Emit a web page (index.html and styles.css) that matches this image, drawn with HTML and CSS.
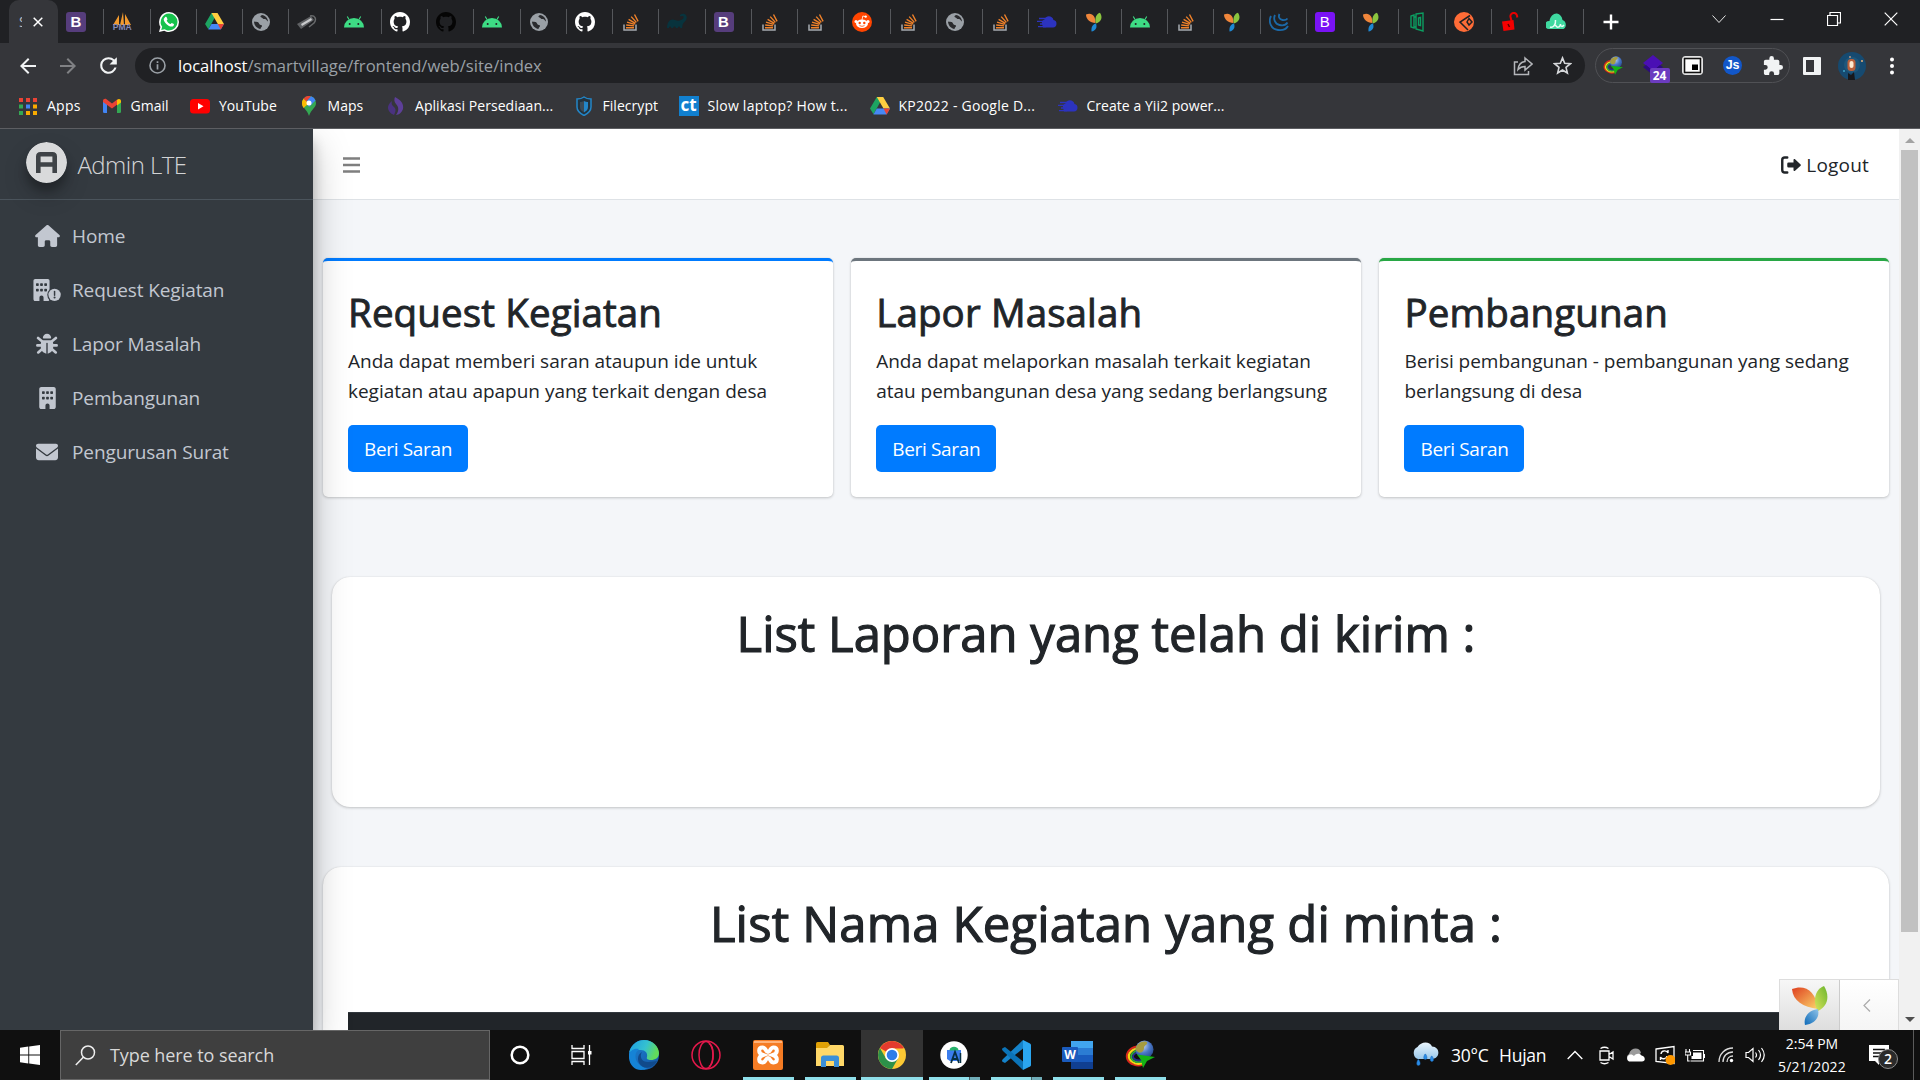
FILE: index.html
```html
<!DOCTYPE html>
<html lang="id">
<head>
<meta charset="utf-8">
<title>Smart Village</title>
<link rel="stylesheet" href="styles.css">
</head>
<body>
<svg class="sprite" width="0" height="0" aria-hidden="true">
<defs>
<linearGradient id="g-yr" x1="0" y1="0" x2="1" y2="1"><stop offset="0" stop-color="#df3f1f"/><stop offset="1" stop-color="#fbd56b"/></linearGradient>
<linearGradient id="g-yg" x1="1" y1="0" x2="0" y2="1"><stop offset="0" stop-color="#6cb52d"/><stop offset="1" stop-color="#d9e45c"/></linearGradient>
<linearGradient id="g-yb" x1="1" y1="0" x2="0" y2="1"><stop offset="0" stop-color="#8fc3e8"/><stop offset="1" stop-color="#0d6ab8"/></linearGradient>
<linearGradient id="g-edge" x1="0" y1="0" x2="1" y2=".3"><stop offset="0" stop-color="#1b9de2"/><stop offset=".6" stop-color="#35c1d0"/><stop offset="1" stop-color="#62dc5a"/></linearGradient>
<linearGradient id="g-edge2" x1="0" y1="0" x2="1" y2="1"><stop offset="0" stop-color="#1c86d8"/><stop offset="1" stop-color="#1453a0"/></linearGradient>
<radialGradient id="g-globe" cx=".4" cy=".3" r=".8"><stop offset="0" stop-color="#c9d9f0"/><stop offset=".5" stop-color="#4a78c8"/><stop offset="1" stop-color="#20407f"/></radialGradient>
<linearGradient id="g-cloud" x1="0" y1="0" x2="0" y2="1"><stop offset="0" stop-color="#eaf5fd"/><stop offset="1" stop-color="#9ac8ea"/></linearGradient>
</defs>
<symbol id="pma" viewBox="0 0 20 20"><path d="M1 13 7 3l0 10zM8 13 11 0l1 13zM13 13V2l6 11z" fill="#f29a2e"/></symbol>
<symbol id="wa" viewBox="0 0 20 20"><path d="M10 0a10 10 0 0 1 0 20c-2 0-3.300-.4-4.800-1.300L0 20l1.400-5A10 10 0 0 1 10 0z" fill="#fff"/><path d="M10 1.500a8.500 8.500 0 0 1 0 17c-1.700 0-3-.4-4.400-1.300L2.200 18l1-3.200A8.500 8.500 0 0 1 10 1.500z" fill="#16c24c"/><path d="M6 5.300c.8-.7 1.500-.5 1.800.2l.7 1.700c.1.600-.8 1.200-.8 1.600.9 1.600 2 2.600 3.600 3.300.5 0 1-1.200 1.500-1.200l2 1c.5.300 0 1.800-.8 2.300-3 1.700-9.600-3.500-9.300-7.300z" fill="#fff"/></symbol>
<symbol id="drive" viewBox="0 0 20 18"><path d="M6.800 0h6.400L10 5.600 3.500 17.300 0 11.600z" fill="#1da462"/><path d="M6.800 0h6.400L20 11.600h-6.500z" fill="#ffcf40"/><path d="M6.800 11.600H20l-3.400 5.900H3.400z" fill="#4688f4"/><path d="M13.500 11.600H20l-3.400 5.900z" fill="#ea4335"/></symbol>
<symbol id="globe" viewBox="0 0 20 20"><circle cx="10" cy="10" r="9" fill="#9aa0a6"/><path d="M3 9.500c2 .5 4.500 0 5 2s3 1 3 2.500-1.500 1-1.500 3C5.800 16.500 3 13 3 9.500zM11 3c-2 .8-2 2-.5 2.500S12 7.500 14 7c1.500-.2 2 2.500 3 2.500C17 6.500 14.500 3.500 11 3z" fill="#2a2b2e"/></symbol>
<symbol id="chip" viewBox="0 0 20 20"><path d="M0 12 14 4l3 4L4 17z" fill="#5f6164"/><path d="M4 12 14 6l1 2L5 14z" fill="#c9cacc"/><path d="M13 4c5-1 7 3 4 7l-5 4" fill="none" stroke="#67696b" stroke-width="1.500"/></symbol>
<symbol id="android" viewBox="0 0 20 20"><path d="M0 15.500a10 9.500 0 0 1 20 0z" fill="#3ddc84"/><path d="M5 7.500 3.300 4.500M15 7.500l1.700-3" stroke="#3ddc84" stroke-width="1.100"/><circle cx="5.700" cy="12" r="1" fill="#202124"/><circle cx="14.300" cy="12" r="1" fill="#202124"/></symbol>
<symbol id="gh" viewBox="0 0 16 16"><path d="M8 0C3.580 0 0 3.580 0 8c0 3.540 2.290 6.530 5.470 7.590.4.070.55-.17.55-.38 0-.19-.01-.82-.01-1.490-2.010.37-2.530-.49-2.690-.94-.09-.23-.48-.94-.82-1.130-.28-.15-.68-.52-.01-.53.63-.01 1.080.58 1.230.82.72 1.210 1.870.87 2.330.66.070-.52.28-.87.51-1.070-1.780-.2-3.640-.89-3.640-3.950 0-.87.31-1.590.82-2.150-.08-.2-.36-1.020.08-2.120 0 0 .67-.21 2.200.82.64-.18 1.320-.27 2-.27.68 0 1.360.09 2 .27 1.530-1.040 2.200-.82 2.200-.82.44 1.100.16 1.920.08 2.120.51.56.82 1.270.82 2.150 0 3.070-1.870 3.750-3.650 3.950.29.25.54.73.54 1.480 0 1.070-.01 1.930-.01 2.200 0 .21.15.46.55.38A8.010 8.010 0 0 0 16 8c0-4.420-3.580-8-8-8z" fill="currentColor"/></symbol>
<symbol id="so" viewBox="0 0 20 20"><path d="M3 12.500V18h12v-5.500" fill="none" stroke="#a5abb0" stroke-width="1.500"/><path d="M5 15.700h8M5.200 13l7.900.9M6 10.200l7.600 2.200M7.600 7.300l6.800 4.100M10.200 4.600l5.200 5.800M13.500 2.500l3.600 6.800" stroke="#f0822a" stroke-width="1.400"/></symbol>
<symbol id="gradle" viewBox="0 0 20 20"><path d="M0 16C0 9 4 6 8 8c3 1.500 5 .5 7-.5s2-3.500.5-3.500-1.500 1-2.500 0 2-3 4.500-2 3.500 5 0 8c-2 1.500-2 3-2.300 6h-2c-.2-2-2.200-2-2.400 0h-2c-.2-2-2.400-2-2.600 0h-2c-.3-2-2-2-2.200 0z" fill="#08333d"/></symbol>
<symbol id="reddit" viewBox="0 0 20 20"><circle cx="10" cy="10" r="10" fill="#ff4500"/><ellipse cx="10" cy="11.800" rx="6" ry="4.200" fill="#fff"/><circle cx="4" cy="9.500" r="1.500" fill="#fff"/><circle cx="16" cy="9.500" r="1.500" fill="#fff"/><circle cx="13.700" cy="4.600" r="1.200" fill="#fff"/><path d="M10 8l.8-4 3 .7" stroke="#fff" stroke-width=".8" fill="none"/><circle cx="7.700" cy="11" r="1.200" fill="#ff4500"/><circle cx="12.300" cy="11" r="1.200" fill="#ff4500"/><path d="M7.500 13.600q2.500 1.500 5 0" stroke="#ff4500" stroke-width=".8" fill="none"/></symbol>
<symbol id="cloudy" viewBox="0 0 20 20"><path d="M6 15.500h10a3.800 3.800 0 0 0 .5-7.500C15.500 3.500 9 3 7.500 7.500 5 8 4.500 10 5 11.500z" fill="#2c33bf"/><path d="M2 6.500h7M0 9.300h8M3 12h6M1 14.700h8" stroke="#2c33bf" stroke-width="1.300"/></symbol>
<symbol id="yii" viewBox="0 0 20 20"><path d="M2 2.500C8 0 11.500 4 11.500 11 6 10.500 2 7.500 2 2.500z" fill="#f0863b"/><path d="M16 .8c3 4.500 1.500 9-4 10.700-1.500-4.500 0-9.500 4-10.700z" fill="#8bc53f"/><path d="M12 11.500c1.500 4-.5 7.500-4.500 8-.5-4 1-7.500 4.500-8z" fill="#1e88d2"/></symbol>
<symbol id="jq" viewBox="0 0 20 20"><path d="M2 4c-3 6 0 13 7 14 4 .5 8-.5 10-4M6 3c-2 4 0 9 4.500 10 3 .7 6.500 0 8-2.500M10.500 2c-1.500 3 0 5.500 3 6 2 .3 4-.2 5-1.500" fill="none" stroke="#1b69a8" stroke-width="1.800"/></symbol>
<symbol id="door" viewBox="0 0 20 20"><path d="M4 4v11l3 1V3zM9 2l7-1v18l-7-2zM11.500 6l2-.5v8l-2-.5zM7 5h2M7 15h2" fill="none" stroke="#0c9d61" stroke-width="1.400"/></symbol>
<symbol id="postman" viewBox="0 0 20 20"><circle cx="10" cy="10" r="10" fill="#ff6c37"/><path d="M16 3.500 6 10l8 8M13 10l2-3.500 3 3.500-3 3z" fill="none" stroke="#202124" stroke-width="1.500"/></symbol>
<symbol id="lock" viewBox="0 0 20 20"><path d="M2 9.500 13.500 8l1 9.500L3.500 19z" fill="#f40000"/><path d="M11.500 9 10.500 5a3.300 3.300 0 0 1 6.500-1.500l.3 2" fill="none" stroke="#e90000" stroke-width="2"/><path d="M8 12l1.500 3" stroke="#5c0000" stroke-width="1.500"/></symbol>
<symbol id="mint" viewBox="0 0 20 20"><path d="M3 17a4 4 0 0 1 .5-8C4 4 8 1 11 1.500s5 3 5.500 6.500c4 1 4.500 7 1 9z" fill="#3fd9a0"/><path d="M4 15c3 1 6-2 5.500-7M9.500 13c1 3 4.500 3 5-1 0 3 2 3 3.500 1" fill="none" stroke="#e8fff6" stroke-width="1.500"/></symbol>
<symbol id="idm" viewBox="0 0 30 30"><g fill="none"><path d="M12 6.500C3 8 .5 15 2.500 19.500S12 27 18 24.500" stroke="#d8271c" stroke-width="2"/><path d="M12 8.500c-7 1.500-9.500 6.500-7.500 10.500s8 6 13 4" stroke="#f6d616" stroke-width="2.200"/><path d="M13 10.500c-5.500 1-8 5-6.500 8s6 4.500 11 3" stroke="#2fae35" stroke-width="2"/><path d="M13 12.500c-4 .5-6 3.500-4.500 5.500s5 3 9 2" stroke="#26308c" stroke-width="1.800"/></g><circle cx="19.500" cy="9.500" r="9" fill="url(#g-globe)"/><path d="M11 7c2-4.500 7-6.500 11-5 1 3-3 3-3 6s-3 6-6 4-2.500-3-2-5z" fill="#a59c3f"/><path d="m12 14.500 18 2.500-8 4-4 7-2-8z" fill="#15b315"/></symbol>
<symbol id="i-home" viewBox="0 0 576 512"><path fill="currentColor" d="M575.800 255.500c0 18-15 32.100-32 32.100h-32l.7 160.200c0 2.700-.2 5.400-.5 8.100V472c0 22.100-17.900 40-40 40H392c-22.100 0-40-17.900-40-40v-88c0-17.700-14.300-32-32-32h-64c-17.700 0-32 14.300-32 32v88c0 22.100-17.900 40-40 40h-80c-22.100 0-40-17.900-40-40V287.600H32c-18 0-32-14-32-32.100 0-9 3-17 10-24L266.400 8c7-7 15-8 22-8s15 2 21 7l255.400 224.500c8 7 12 15 11 24z"/></symbol>
<symbol id="i-building" viewBox="0 0 384 512"><path fill="currentColor" fill-rule="evenodd" d="M48 0C21.500 0 0 21.500 0 48v416c0 26.500 21.500 48 48 48h96v-80c0-26.500 21.500-48 48-48s48 21.500 48 48v80h96c26.500 0 48-21.500 48-48V48c0-26.500-21.500-48-48-48zM64 112q0-16 16-16h32q16 0 16 16v32q0 16-16 16H80q-16 0-16-16zm96 0q0-16 16-16h32q16 0 16 16v32q0 16-16 16h-32q-16 0-16-16zm96 0q0-16 16-16h32q16 0 16 16v32q0 16-16 16h-32q-16 0-16-16zM64 240q0-16 16-16h32q16 0 16 16v32q0 16-16 16H80q-16 0-16-16zm96 0q0-16 16-16h32q16 0 16 16v32q0 16-16 16h-32q-16 0-16-16zm96 0q0-16 16-16h32q16 0 16 16v32q0 16-16 16h-32q-16 0-16-16z"/></symbol>
<symbol id="i-bex" viewBox="0 0 640 512"><use href="#i-building" x="0" y="0" width="384" height="512"/><circle cx="496" cy="368" r="170" fill="#343a40"/><circle cx="496" cy="368" r="144" fill="currentColor"/><path d="M496 288v88" stroke="#343a40" stroke-width="34" stroke-linecap="round"/><circle cx="496" cy="432" r="24" fill="#343a40"/></symbol>
<symbol id="i-bug" viewBox="0 0 512 512"><path fill="currentColor" d="M160 112a96 96 0 0 1 192 0q0 16-16 16H176q-16 0-16-16z"/><path fill="currentColor" d="M160 168h192q48 10 48 70v90c0 80-60 144-128 152V240q0-16-16-16t-16 16v240c-68-8-128-72-128-152v-90q0-60 48-70z"/><path d="M48 116l92 76M464 116l-92 76M32 288h90M480 288h-90M52 452l92-80M460 452l-92-80" stroke="currentColor" stroke-width="62" stroke-linecap="round"/></symbol>
<symbol id="i-env" viewBox="0 0 512 512"><path fill="currentColor" d="M48 64C21.500 64 0 85.500 0 112c0 15.100 7.100 29.300 19.200 38.400l217.600 163.200c11.400 8.500 27 8.500 38.400 0l217.600-163.200c12.100-9.100 19.200-23.300 19.200-38.400 0-26.500-21.500-48-48-48zM0 176v208c0 35.300 28.700 64 64 64h384c35.300 0 64-28.700 64-64V176L294.400 339.200c-22.800 17.100-54 17.100-76.800 0z"/></symbol>
<symbol id="i-out" viewBox="0 0 512 512"><path d="M160 64H96q-64 0-64 64v256q0 64 64 64h64" fill="none" stroke="currentColor" stroke-width="62" stroke-linecap="round"/><path d="M192 192h128v-64q0-32 32-24l150 136q14 16 0 32L352 408q-32 8-32-24v-64H192q-32 0-32-32v-64q0-32 32-32z" fill="currentColor"/></symbol>
</svg>

<header class="tabstrip">
  <div class="tab-active"><span class="tab-title">S</span><svg class="tab-x" viewBox="0 0 10 10"><path d="M.7.700l8.600 8.600M9.300.700.7 9.300" stroke="#fff" stroke-width="1.500"/></svg></div>
  <nav class="tabs">
    <span class="tab"><b class="boot">B</b></span>
    <span class="tab pma"><svg><use href="#pma"/></svg><b>PMA</b></span>
    <span class="tab"><svg><use href="#wa"/></svg></span>
    <span class="tab"><svg class="sm"><use href="#drive"/></svg></span>
    <span class="tab"><svg><use href="#globe"/></svg></span>
    <span class="tab"><svg><use href="#chip"/></svg></span>
    <span class="tab"><svg><use href="#android"/></svg></span>
    <span class="tab"><svg><use href="#gh"/></svg></span>
    <span class="tab dark"><svg><use href="#gh"/></svg></span>
    <span class="tab"><svg><use href="#android"/></svg></span>
    <span class="tab"><svg><use href="#globe"/></svg></span>
    <span class="tab"><svg><use href="#gh"/></svg></span>
    <span class="tab"><svg><use href="#so"/></svg></span>
    <span class="tab"><svg><use href="#gradle"/></svg></span>
    <span class="tab"><b class="boot">B</b></span>
    <span class="tab"><svg><use href="#so"/></svg></span>
    <span class="tab"><svg><use href="#so"/></svg></span>
    <span class="tab"><svg><use href="#reddit"/></svg></span>
    <span class="tab"><svg><use href="#so"/></svg></span>
    <span class="tab"><svg><use href="#globe"/></svg></span>
    <span class="tab"><svg><use href="#so"/></svg></span>
    <span class="tab"><svg><use href="#cloudy"/></svg></span>
    <span class="tab"><svg><use href="#yii"/></svg></span>
    <span class="tab"><svg><use href="#android"/></svg></span>
    <span class="tab"><svg><use href="#so"/></svg></span>
    <span class="tab"><svg><use href="#yii"/></svg></span>
    <span class="tab"><svg><use href="#jq"/></svg></span>
    <span class="tab"><b class="boot five">B</b></span>
    <span class="tab"><svg><use href="#yii"/></svg></span>
    <span class="tab"><svg><use href="#door"/></svg></span>
    <span class="tab"><svg><use href="#postman"/></svg></span>
    <span class="tab"><svg><use href="#lock"/></svg></span>
    <span class="tab"><svg><use href="#mint"/></svg></span>
  </nav>
  <svg class="newtab" viewBox="0 0 16 16"><path d="M8 .5v15M.5 8h15" stroke="#fff" stroke-width="2.400"/></svg>
  <div class="winctl">
    <svg viewBox="0 0 14 14"><path d="m.5 3.500 6.500 7 6.500-7" fill="none" stroke="#e8e8e8"/></svg>
    <svg viewBox="0 0 14 14"><path d="M.5 7.500h13" stroke="#fff" stroke-width="1.200"/></svg>
    <svg viewBox="0 0 14 14"><path d="M.5 3.500h10v10H.5zM3 3.500v-3h10.500V11H11" fill="none" stroke="#fff" stroke-width="1.200"/></svg>
    <svg viewBox="0 0 14 14"><path d="M.7.700l12.600 12.600M13.300.700.7 13.300" stroke="#fff" stroke-width="1.200"/></svg>
  </div>
</header>

<div class="toolbar">
  <span class="slot"><svg width="24" height="24" viewBox="0 0 24 24"><path d="M20 11H7.830l5.590-5.590L12 4l-8 8 8 8 1.410-1.410L7.830 13H20z" fill="#f1f3f4"/></svg></span>
  <span class="slot"><svg width="24" height="24" viewBox="0 0 24 24"><path d="m12 4-1.410 1.410L16.170 11H4v2h12.170l-5.580 5.590L12 20l8-8z" fill="#808184"/></svg></span>
  <span class="slot"><svg width="25" height="25" viewBox="0 0 24 24"><path d="M17.650 6.350A7.950 7.950 0 0 0 12 4a8 8 0 1 0 7.730 10h-2.080A6 6 0 1 1 12 6c1.660 0 3.140.69 4.220 1.780L13 11h7V4z" fill="#f1f3f4"/></svg></span>
  <div class="omnibox">
    <svg width="17" height="17" viewBox="0 0 17 17"><circle cx="8.500" cy="8.500" r="7.500" fill="none" stroke="#9aa0a6" stroke-width="1.600"/><path d="M8.500 7.300v5.200M8.500 4.300v1.800" stroke="#9aa0a6" stroke-width="1.700"/></svg>
    <span class="url"><b>localhost</b>/smartvillage/frontend/web/site/index</span>
    <svg class="share" width="20" height="20" viewBox="0 0 20 20"><path d="M5 6H1.500v12.500h14V15M12 2l7 6-7 6v-3.500c-3 0-5 .8-7 3 .5-4.500 3-7.500 7-8z" fill="none" stroke="#b4b6ba" stroke-width="1.500"/></svg>
    <svg class="star" width="19" height="19" viewBox="0 0 20 20"><path d="m10 2 2.300 5.600 6 .5-4.600 3.900 1.400 5.900L10 14.700l-5.100 3.200L6.300 12 1.700 8.100l6-.5z" fill="none" stroke="#d5d7da" stroke-width="1.700"/></svg>
  </div>
  <div class="exts">
    <span class="slot"><svg width="20" height="20"><use href="#idm"/></svg></span>
    <span class="slot ext24"><svg width="22" height="22" viewBox="0 0 22 22"><path d="m11 0 10 8-10 8L1 8z" fill="#4a0fb4"/><path d="m1 12 3-2 7 6 7-6 3 2-10 8z" fill="#2d0a80"/></svg><em>24</em></span>
    <span class="slot"><svg width="21" height="19" viewBox="0 0 21 19"><rect x=".7" y=".7" width="19.600" height="17.600" rx="2" fill="#f5f5f5" stroke="#fff"/><rect x="2.500" y="2.500" width="16" height="14" fill="#fff" stroke="#111" stroke-width="1.600"/><rect x="10" y="8.500" width="6" height="5.500"/></svg></span>
    <span class="slot"><i class="js">Js</i></span>
    <span class="slot"><svg width="20" height="20" viewBox="1 1 22 22"><path d="M20.500 11H19V7c0-1.100-.9-2-2-2h-4V3.500a2.500 2.500 0 0 0-5 0V5H4c-1.100 0-2 .9-2 2v3.800h1.500a2.700 2.700 0 0 1 0 5.400H2V20c0 1.100.9 2 2 2h3.800v-1.500a2.700 2.700 0 0 1 5.400 0V22H17c1.100 0 2-.9 2-2v-4h1.500a2.500 2.500 0 0 0 0-5z" fill="#f1f3f4"/></svg></span>
  </div>
  <span class="slot panelbtn"><svg width="18" height="18" viewBox="0 0 18 18"><rect width="18" height="18" rx="1" fill="#f1f3f4"/><rect x="3" y="3" width="8" height="12" fill="#35363a"/></svg></span>
  <span class="slot"><svg width="28" height="28" viewBox="0 0 28 28"><circle cx="14" cy="14" r="14" fill="#164a70"/><circle cx="14" cy="13" r="8" fill="#1d577c"/><circle cx="6" cy="19" r="1" fill="#3ea6c9"/><circle cx="24" cy="9" r="1" fill="#e9b277"/><circle cx="12" cy="5" r="1" fill="#b4978a"/><rect x="9.500" y="7" width="8" height="12" rx="3.500" fill="#b9603c"/><rect x="11.500" y="9" width="4" height="7" rx="2" fill="#ffe9cf"/><path d="M10 28v-7l3 2 3-3 1 8z" fill="#17181c"/></svg></span>
  <span class="slot"><svg width="6" height="18" viewBox="0 0 6 18"><circle cx="3" cy="2.500" r="2" fill="#fff"/><circle cx="3" cy="9" r="2" fill="#fff"/><circle cx="3" cy="15.500" r="2" fill="#fff"/></svg></span>
</div>

<nav class="bookmarks">
  <a class="wide-ls"><svg viewBox="0 0 20 20"><path d="M1 2h4v4H1zM8 2h4v4H8zM15 2h4v4h-4z" fill="#ea4335"/><path d="M1 8.500h4v4H1zM1 15h4v4H1z" fill="#34a853"/><path d="M8 8.500h4v4H8z" fill="#4285f4"/><path d="M15 8.500h4v4h-4zM8 15h4v4H8zM15 15h4v4h-4z" fill="#f9ab00"/></svg>Apps</a>
  <a><svg viewBox="0 0 20 20"><path d="M1 4.500 5 7.500v9.500H2.300Q1 17 1 15.700z" fill="#4285f4"/><path d="M19 4.500 15 7.500v9.500h2.700q1.300 0 1.300-1.300z" fill="#34a853"/><path d="M1 5c0-2 2-2.800 3.500-1.700L10 7.500l5.500-4.200v5L10 12.500 1 6z" fill="#ea4335"/><path d="M15 4c1.800-1.700 4-.7 4 1v1.500L15 9.500z" fill="#fbbc04"/></svg>Gmail</a>
  <a><svg viewBox="0 0 20 20"><rect y="3" width="20" height="14.500" rx="3.500" fill="#f00"/><path d="m8 7 5.500 3.200L8 13.500z" fill="#fff"/></svg>YouTube</a>
  <a><svg viewBox="0 0 20 20"><path d="M10 0a7 7 0 0 1 7 7c0 5-5 6-7 13-2-7-7-8-7-13a7 7 0 0 1 7-7z" fill="#34a853"/><path d="M3 7a7 7 0 0 1 1.700-4.500L10 7l-5.500 5C3.500 10.500 3 9 3 7z" fill="#fbbc04"/><path d="M4.500 2.700A7 7 0 0 1 12 .3L7.500 5.500z" fill="#ea4335"/><path d="M12 .3A7 7 0 0 1 16.500 4.500L10 11 7.500 5.500z" fill="#4285f4"/><circle cx="10" cy="7" r="2.500" fill="#fff"/></svg>Maps</a>
  <a><svg viewBox="0 0 20 20"><path d="M9 1c6 3 9 7 8 12-1 3-4 6-7 6 3-4 3-8 0-11C8 6 8 3 9 1z" fill="#5d3f98"/><path d="M6 5C2 8 1 12 3 15c1 2 3 3 5 4 2-4 2-6 0-8S5 8 6 5z" fill="#4a3280"/></svg>Aplikasi Persediaan...</a>
  <a><svg viewBox="0 0 20 20"><path d="M10 1c2 1.500 4.500 2 7 2v8c0 4-3 6.500-7 8.500-4-2-7-4.500-7-8.500V3c2.500 0 5-.5 7-2z" fill="#23323d" stroke="#2386c8" stroke-width="1.500"/><path d="M10 5c1.500.8 2.700 1 4 1v5c0 2.500-1.500 4-4 5.500z" fill="#2386c8"/><path d="M10 5c-1.500.8-2.700 1-4 1v5c0 2.500 1.500 4 4 5.500z" fill="#3d4b56"/></svg>Filecrypt</a>
  <a class="wide-ls"><b class="ct">ct</b>Slow laptop? How t...</a>
  <a class="wide-ls"><svg><use href="#drive"/></svg>KP2022 - Google D...</a>
  <a><svg><use href="#cloudy"/></svg>Create a Yii2 power...</a>
</nav>

<div class="page">
  <aside class="sidebar">
    <div class="brand"><svg class="logo" viewBox="0 0 41 41"><circle cx="20.500" cy="20.500" r="20.500" fill="#d9dadb"/><path d="M12.300 31V14.500q0-2.200 2.200-2.200h12q2.200 0 2.200 2.200V31M12.300 22.500h16.400" fill="none" stroke="#3f4347" stroke-width="4.600"/></svg>Admin LTE</div>
    <a class="nav"><i><svg width="25" height="22"><use href="#i-home"/></svg></i>Home</a>
    <a class="nav"><i><svg width="28" height="22"><use href="#i-bex"/></svg></i>Request Kegiatan</a>
    <a class="nav"><i><svg width="22" height="22"><use href="#i-bug"/></svg></i>Lapor Masalah</a>
    <a class="nav"><i><svg width="17" height="22"><use href="#i-building"/></svg></i>Pembangunan</a>
    <a class="nav"><i><svg width="22" height="22"><use href="#i-env"/></svg></i>Pengurusan Surat</a>
  </aside>
  <div class="main">
    <div class="topnav">
      <svg width="17" height="16" viewBox="0 0 17 16"><path d="M0 1.500h17M0 8h17M0 14.500h17" stroke="#7f7f7f" stroke-width="2.400"/></svg>
      <a class="logout"><svg width="20" height="20"><use href="#i-out"/></svg>Logout</a>
    </div>
    <section class="cards">
      <article class="card blue"><h2>Request Kegiatan</h2><p>Anda dapat memberi saran ataupun ide untuk<br>kegiatan atau apapun yang terkait dengan desa</p><a class="btn">Beri Saran</a></article>
      <article class="card gray"><h2>Lapor Masalah</h2><p>Anda dapat melaporkan masalah terkait kegiatan<br>atau pembangunan desa yang sedang berlangsung</p><a class="btn">Beri Saran</a></article>
      <article class="card green"><h2>Pembangunan</h2><p>Berisi pembangunan - pembangunan yang sedang<br>berlangsung di desa</p><a class="btn">Beri Saran</a></article>
    </section>
    <section class="panel first"><h1>List Laporan yang telah di kirim :</h1></section>
    <section class="panel second"><h1>List Nama Kegiatan yang di minta :</h1><div class="thead"></div></section>
    <div class="debugbar">
      <div class="dbg-logo"><svg width="38" height="40" viewBox="0 0 38 40"><path d="M1 4C14-1 25 6 27 24 12 22 2 16 1 4z" fill="url(#g-yr)"/><path d="M33 1c6 10 4 20-6 25-6-9-3-22 6-25z" fill="url(#g-yg)"/><path d="M27 24c2 8-3 15-13 16-2-9 5-15 13-16z" fill="url(#g-yb)"/></svg></div>
      <div class="dbg-toggle"><svg width="8" height="13" viewBox="0 0 8 13"><path d="M7 .5 1 6.500l6 6" fill="none" stroke="#aaa" stroke-width="1.200"/></svg></div>
    </div>
  </div>
  <div class="scroll"><i class="up"></i><i class="thumb"></i><i class="down"></i></div>
</div>

<footer class="taskbar">
  <span class="start"><svg width="20" height="20" viewBox="0 0 20 20"><path d="M0 2.800 8.300 1.600v8H0zM9.200 1.500 20 0v9.600H9.200zM0 10.400h8.300v8L0 17.200zM9.200 10.400H20V20L9.200 18.500z" fill="#fff"/></svg></span>
  <div class="search"><svg width="21" height="21" viewBox="0 0 21 21"><circle cx="13" cy="7.500" r="6.500" fill="none" stroke="#eee" stroke-width="1.500"/><path d="M8.300 12.200.8 20" stroke="#eee" stroke-width="1.500"/></svg>Type here to search</div>
  <span class="tk"><svg width="20" height="20" viewBox="0 0 20 20"><circle cx="10" cy="10" r="8.300" fill="none" stroke="#fff" stroke-width="2.500"/></svg></span>
  <span class="tk wide"><svg width="21" height="20" viewBox="0 0 21 20"><path d="M1 0v3.500h12V0M1 20v-3.500h12V20M1 6.500h12v7H1zM18.500 0v20" fill="none" stroke="#fff" stroke-width="1.300"/><rect x="17" y="6" width="3.500" height="3.500" fill="#fff"/></svg></span>
  <span class="app"><svg width="30" height="30" viewBox="0 0 30 30"><circle cx="15" cy="15" r="15" fill="url(#g-edge2)"/><path d="M0 13C2 4 9 0 15 0c9 0 15 7 15 13 0 5-4 7-8 7-3 0-5-1-4-3 1-4-2-7-6-7-6 0-11 1-12 3z" fill="url(#g-edge)"/><path d="M0 14c2-5 7-6 10-5-4 3-5 9-1 14 3 4 7 5 10 5-9 5-20 0-19-14z" fill="#1583d6"/><path d="M13 12c-3 5 0 10 6 10 4 0 7-1 9-1-4 8-14 9-18 2-2-4-1-9 3-11z" fill="#114a8b"/></svg></span>
  <span class="app"><svg width="30" height="30" viewBox="0 0 30 30"><g fill="none" stroke="#e3194b" stroke-width="1.500"><circle cx="15" cy="15" r="14"/><ellipse cx="15" cy="15" rx="7" ry="13.500"/><path d="M18 3.500c5 2 6 20 0 23"/></g></svg></span>
  <span class="app on"><svg width="30" height="30" viewBox="0 0 30 30"><rect width="30" height="30" rx="2" fill="#f57c24"/><path d="M1 1h28v2H1z" fill="#ffb37a"/><path d="M10 15C4.500 13 5.500 7.500 9.500 7.500c3.500 0 3 4.500 5.500 4.500s2-4.500 5.500-4.500c4 0 5 5.500-.5 7.500 5.500 2 4.500 7.500.5 7.500-3.500 0-3-4.500-5.500-4.500s-2 4.500-5.500 4.500c-4 0-5-5.500.5-7.500z" fill="none" stroke="#fff" stroke-width="4"/></svg></span>
  <span class="app on"><svg width="28" height="26" viewBox="0 0 28 26"><path d="M0 1.500Q0 0 1.500 0H12l2 3-3 4H0z" fill="#e0a106"/><path d="M0 6h11l3-3h12.500Q28 3 28 4.500V24H0z" fill="#ffd868"/><path d="M5 25V16q0-2.500 2.500-2.500h13Q23 13.500 23 16v9h-5v-6h-8v6z" fill="#3a8fd8"/></svg></span>
  <span class="app on active"><svg width="28" height="28" viewBox="0 0 28 28"><circle cx="14" cy="14" r="14" fill="#fcc934"/><path d="M14 14 1.900 7A14 14 0 0 1 26.100 7z" fill="#e33b2e"/><path d="M1.900 7A14 14 0 0 0 14 28l6-10.500L8 17.500z" fill="#2d9149"/><path d="M14 7.500h12.500L20 17.500z" fill="#fcc934"/><circle cx="14" cy="14" r="7" fill="#fff"/><circle cx="14" cy="14" r="5.300" fill="#2f7de9"/></svg></span>
  <span class="app on multi"><svg width="28" height="28" viewBox="0 0 28 28"><circle cx="14" cy="14" r="13.700" fill="#fff"/><path d="M7 9h14v11H10l-3-2z" fill="#3b7ded"/><path d="M9.500 9.500c0-5 9-5 9 0z" fill="#27b36b"/><path d="m11 22 4-11 4 11M12.500 18h5" fill="none" stroke="#073042" stroke-width="1.800"/><path d="M20.500 12v10" stroke="#073042" stroke-width="1.500"/></svg></span>
  <span class="app on multi"><svg width="30" height="30" viewBox="0 0 30 30"><path d="M22 0 2 19q-2 2 0 3l2 1L22 8.500z" fill="#1583ca"/><path d="M22 30 2 11q-2-2 0-3l2-1 18 14.500z" fill="#0b73b7"/><path d="m22 0 7 3.500q1 .5 1 1.500v20q0 1-1 1.500L22 30z" fill="#2ba6f0"/></svg></span>
  <span class="app on word"><svg width="29" height="28" viewBox="0 0 29 28"><path d="M7 0h22v7H7z" fill="#41a5ee"/><path d="M7 7h22v7H7z" fill="#2b7cd3"/><path d="M7 14h22v7H7z" fill="#185abd"/><path d="M7 21h22v7H7z" fill="#103f91"/></svg><b>W</b></span>
  <span class="app on"><svg width="30" height="30"><use href="#idm"/></svg></span>
  <div class="tray">
    <svg width="28" height="26" viewBox="0 0 28 26"><path d="M7 17a6.500 6.500 0 0 1-.5-12C10-1 19-1 21 4.500c8 0 9 11.500 0 12.500z" fill="url(#g-cloud)"/><path d="M7 17.500c-2 3.500-1.500 6 .5 6s2.500-3 0-6zM14 12c-2 3-1.500 5.500.5 5.500s2-3 0-5.500zM20.500 14c-2 3-1.500 5.500.5 5.500s2-3 0-5.500z" fill="#2b8ce6" stroke="#155fae" stroke-width=".4"/></svg>
    <span class="temp">30°C</span><span class="temp">Hujan</span>
    <svg width="16" height="10" viewBox="0 0 16 10"><path d="m.7 9 7.300-7.500L15.300 9" fill="none" stroke="#fff" stroke-width="1.400"/></svg>
    <svg width="15" height="19" viewBox="0 0 15 19"><path d="M1 5h9v9H1zM10 8.500l4-2.500v7l-4-2.500M1.500 2.500q4-2.500 8 0M1.500 16.500q4 2.500 8 0" fill="none" stroke="#fff" stroke-width="1.300"/></svg>
    <svg width="20" height="14" viewBox="0 0 20 14"><path d="M4 13a4 4 0 0 1 0-7C6-1 15-1 16 5z" fill="#9b9b9b"/><path d="M4 13.500a3.800 3.800 0 0 1 0-6.500c2-1 4 0 5 1 2-3 6-3 7.500-.5 4 .5 4.500 6 .5 6z" fill="#fff"/></svg>
    <svg width="20" height="20" viewBox="0 0 20 20"><path d="M1 4 19 1.500v17L1 16.500z" fill="none" stroke="#fff" stroke-width="1.300"/><path d="M6 9c.5-4 6-4 7-1V5M12 11c-.5 3-5 4-6.500 1v3" fill="none" stroke="#fff" stroke-width="1.400"/><circle cx="15.500" cy="15" r="5" fill="#ff9800"/></svg>
    <svg width="20" height="15" viewBox="0 0 20 15"><path d="M8 2.500h10.500v10.500H5.500M19.500 6v4M1 1v3M4.500 1v3M0 4h5.500v3H0zM2.700 7v6h2" fill="none" stroke="#fff" stroke-width="1.100"/><path d="M8 4.500h8.500V11H6.500V8H8z" fill="#fff"/></svg>
    <svg width="16" height="16" viewBox="0 0 16 16"><path d="M1 15C1 7 7 1 15 1M5 15c0-6 4-10 10-10M9 15c0-3.500 2.500-6 6-6" fill="none" stroke="#ddd" stroke-width="1.300"/><circle cx="13.500" cy="13.500" r="1.700" fill="#fff"/></svg>
    <svg width="20" height="16" viewBox="0 0 20 16"><path d="M1 5.500h2.500L8 1.500v13l-4.500-4H1zM10.500 5.500q2 2.500 0 5M13.500 3q4 5 0 10M16.500 1q5.500 7 0 14" fill="none" stroke="#fff" stroke-width="1.200"/></svg>
    <div class="clock"><span>2:54 PM</span><span class="date">5/21/2022</span></div>
    <div class="notif"><svg width="20" height="20" viewBox="0 0 20 20"><path d="M0 0h20v16H10v4l-4-4H0z" fill="#fff"/><path d="M4 4.500h12M4 8h12M4 11.500h8" stroke="#111" stroke-width="1.300"/></svg><em>2</em></div>
    <i class="desk"></i>
  </div>
</footer>
</body>
</html>
```
FILE: styles.css
```css
* { box-sizing: border-box; }
body {
  margin: 0; width: 1920px; height: 1080px; overflow: hidden;
  display: flex; flex-direction: column;
  font-family: "Open Sans", "Noto Sans", sans-serif;
  background: #f4f6f9; color: #212529;
}
.sprite { position: absolute; }
svg { flex: none; display: block; }

/* browser tab strip */
.tabstrip { height: 43px; background: #202124; display: flex; align-items: center; flex: none; padding-left: 9px; }
.tab-active {
  width: 49px; height: 43px; background: #35363a; border-radius: 10px 10px 0 0;
  display: flex; align-items: center; padding-left: 10px; gap: 11px;
}
.tab-title { width: 3px; overflow: hidden; font-size: 14px; color: #b9bbc0; }
.tab-x { width: 10px; height: 10px; }
.tabs { display: flex; }
.tab { width: 46.25px; height: 25px; border-right: 1px solid #55575b; display: flex; align-items: center; padding-left: 8px; color: #fff; }
.tab.dark { color: #050505; }
.tab svg { width: 20px; height: 20px; }
.tab svg.sm { width: 19px; height: 17px; }
.boot { width: 20px; height: 20px; border-radius: 3px; background: #563d7c; color: #fff; font: 700 15px/20px "Liberation Sans", sans-serif; text-align: center; }
.boot.five { background: #7a13f5; font-weight: 400; }
.pma { position: relative; }
.pma b { position: absolute; left: 8px; top: 14px; width: 20px; font: 700 8.5px/9px "Liberation Sans", sans-serif; text-align: center; color: #8589b8; }
.newtab { width: 16px; height: 16px; margin-left: 19px; }
.winctl { display: flex; gap: 43.3px; margin-left: 93px; margin-top: -5px; }
.winctl svg { width: 14px; height: 14px; }

/* address row */
.toolbar { height: 45px; background: #35363a; display: flex; align-items: center; padding-left: 8px; flex: none; }
.slot { width: 40px; height: 35px; flex: none; display: flex; align-items: center; justify-content: center; }
.omnibox { width: 1450px; height: 35px; margin-left: 7px; border-radius: 18px; background: #202124; display: flex; align-items: center; padding: 0 13px 0 14px; }
.url { margin-left: 12px; font-size: 16.6px; color: #9aa0a6; line-height: 24px; white-space: nowrap; }
.url b { font-weight: 400; color: #fff; }
.share { margin-left: auto; }
.star { margin-left: 20px; }
.exts { width: 195px; height: 35px; margin-left: 10px; border: 1px solid #505155; border-radius: 18px; display: flex; align-items: center; justify-content: center; }
.ext24 { position: relative; }
.ext24 em {
  position: absolute; left: 17px; bottom: 0; width: 20px; height: 15px; border-radius: 2px;
  background: #6c3cc0; color: #fff; font: 700 12px/15px "Open Sans", sans-serif; text-align: center;
}
.js { width: 19px; height: 19px; border-radius: 50%; background: #1257c9; color: #fff; font: 700 12.5px/19px "Liberation Sans", sans-serif; text-align: center; letter-spacing: -.3px; }
.panelbtn { margin-left: 2px; }

/* bookmarks */
.bookmarks {
  height: 41px; flex: none; background: #35363a; border-bottom: 1px solid #5d5e62; padding-left: 18px; padding-bottom: 4px;
  display: grid; grid-template-columns: 83.500px 88.500px 108.500px 87.500px 187.500px 105px 191px 188px auto; align-items: center;
}
.bookmarks a { display: flex; align-items: center; gap: 9px; color: #fff; font-size: 14px; line-height: 20px; white-space: nowrap; letter-spacing: .04px; }
.bookmarks .wide-ls { letter-spacing: .25px; }
.bookmarks svg, .ct { width: 20px; height: 20px; }
.ct { background: #1180cf; font: 700 17px/18px "Open Sans", sans-serif; text-align: center; letter-spacing: 0; }

/* page viewport */
.page { height: 901px; flex: none; display: flex; overflow: hidden; background: #f4f6f9; }
.sidebar { width: 313px; background: #343a40; color: #c2c7d0; z-index: 2; box-shadow: 0 17px 35px rgba(0,0,0,.25), 0 12px 12px rgba(0,0,0,.22); }
.brand { height: 71px; border-bottom: 1px solid #4b545c; display: flex; align-items: center; padding-left: 26px; margin-bottom: 9px; font-size: 24px; font-weight: 300; color: rgba(255,255,255,.8); letter-spacing: -.54px; }
.logo { width: 41px; height: 41px; margin: -3px 10.500px 0 0; border-radius: 50%; box-shadow: 0 12px 25px rgba(0,0,0,.19), 0 8px 8px rgba(0,0,0,.23); }
.nav { height: 54px; display: flex; align-items: center; padding-left: 32px; font-size: 19px; letter-spacing: -.11px; }
.nav i { width: 30px; display: flex; justify-content: center; margin-right: 10px; }
.nav svg { margin-top: -1px; }
.main { width: 1586px; position: relative; overflow: hidden; }
.topnav { height: 71px; background: #fff; border-bottom: 1px solid #dee2e6; display: flex; align-items: center; justify-content: space-between; padding: 2px 30px 0 30px; font-size: 19px; }
.logout { display: flex; align-items: center; gap: 5px; letter-spacing: .2px; }
.cards { display: grid; grid-template-columns: repeat(3, 1fr); gap: 18.700px; padding: 58px 10px 0; }
.card { height: 239px; background: #fff; border-radius: 5px; border-top: 3px solid; box-shadow: 0 0 1px rgba(0,0,0,.13), 0 1px 3px rgba(0,0,0,.2); padding: 27px 25px; }
.blue { border-color: #007bff; }
.gray { border-color: #6c757d; }
.green { border-color: #28a745; }
h1, h2 { margin: 0; font-weight: 400; white-space: nowrap; -webkit-text-stroke: .9px #212529; }
h2 { font-size: 38.5px; line-height: 48px; margin-bottom: 10px; letter-spacing: .12px; }
.card p { margin: 0 0 19px; font-size: 19px; line-height: 30px; white-space: nowrap; letter-spacing: -.02px; }
.btn { display: flex; width: 120px; height: 47px; align-items: center; justify-content: center; border-radius: 5px; background: #007bff; color: #fff; font-size: 19px; letter-spacing: -.34px; }
.panel { background: #fff; border-radius: 18px; box-shadow: 0 0 1px rgba(0,0,0,.13), 0 1px 3px rgba(0,0,0,.2); text-align: center; }
.panel h1 { font-size: 49px; line-height: 60px; padding-top: 26px; -webkit-text-stroke-width: 1.2px; }
.first { height: 230px; margin: 80px 19px 60px; }
.second { height: 400px; margin: 0 10px; }
.second h1 { letter-spacing: .17px; }
.thead { height: 100px; margin: 59px 25px 0; background: #212529; border-top: 1px solid #32383e; }
.debugbar { position: absolute; right: 0; bottom: 0; width: 120px; height: 51px; display: flex; border: 1px solid #ddd; border-bottom: 0; background: #fff; }
.dbg-logo { width: 60px; border-right: 1px solid #ccc; background: linear-gradient(#f7f7f7, #dedede); display: flex; align-items: center; justify-content: center; }
.dbg-toggle { flex: 1; display: flex; align-items: center; justify-content: center; padding-right: 4px; background: linear-gradient(#fff, #f5f5f5); }
.scroll { width: 21px; background: #f1f1f1; display: flex; flex-direction: column; align-items: center; }
.up, .down { border: 5px solid transparent; }
.up { border-bottom-color: #a3a3a3; border-top: 0; margin: 9px 0 7px; }
.thumb { width: 17px; height: 782px; background: #c1c1c1; }
.down { border-top-color: #505050; border-bottom: 0; margin-top: 85px; }

/* taskbar */
.taskbar { height: 50px; flex: none; background: #101010; display: flex; color: #fff; }
.start, .tk { width: 60px; display: flex; align-items: center; justify-content: center; }
.search { width: 430px; background: #3f3f3f; border: 1px solid #666; display: flex; align-items: center; padding-left: 14px; gap: 14px; font-size: 18px; color: #d8d8d8; letter-spacing: -.08px; white-space: nowrap; }
.wide { width: 63px; }
.app { width: 62px; height: 50px; display: flex; align-items: center; justify-content: center; background: linear-gradient(#8fdfea, #8fdfea) no-repeat center bottom / 0 3px; }
.app.on { background-size: 51px 3px; }
.app.active { background-size: 62px 3px; background-color: #333; }
.app.multi { background-image: linear-gradient(90deg, #8fdfea 40px, #4a5f62 40px, #4a5f62 41px, #70adb8 41px); }
.word { position: relative; }
.word b { position: absolute; left: 15px; top: 17px; width: 16px; height: 15px; border-radius: 1px; background: #1a5bbd; font: 700 12px/15px "Open Sans", sans-serif; text-align: center; }
.tray {
  margin-left: auto; width: 509px; height: 50px; display: grid; align-items: center;
  grid-template-columns: 40px 48px 68px 32px 26px 30px 30px 33px 27px 30px 87px 58px;
}
.temp { font-size: 17.500px; line-height: 24px; letter-spacing: -.25px; }
.clock { display: flex; flex-direction: column; align-items: center; width: 74px; font-size: 14px; line-height: 23px; }
.date { letter-spacing: .18px; }
.notif { position: relative; width: 30px; height: 30px; padding-top: 5px; margin-left: 7px; }
.notif em { position: absolute; left: 9px; top: 9px; width: 20px; height: 20px; border-radius: 50%; border: 1px solid #8a8a8a; background: #2b2b2b; font: 600 14px/18px "Open Sans", sans-serif; text-align: center; }
.desk { position: absolute; left: 1913px; top: 1030px; width: 1px; height: 50px; background: #5b5b5b; }
```
